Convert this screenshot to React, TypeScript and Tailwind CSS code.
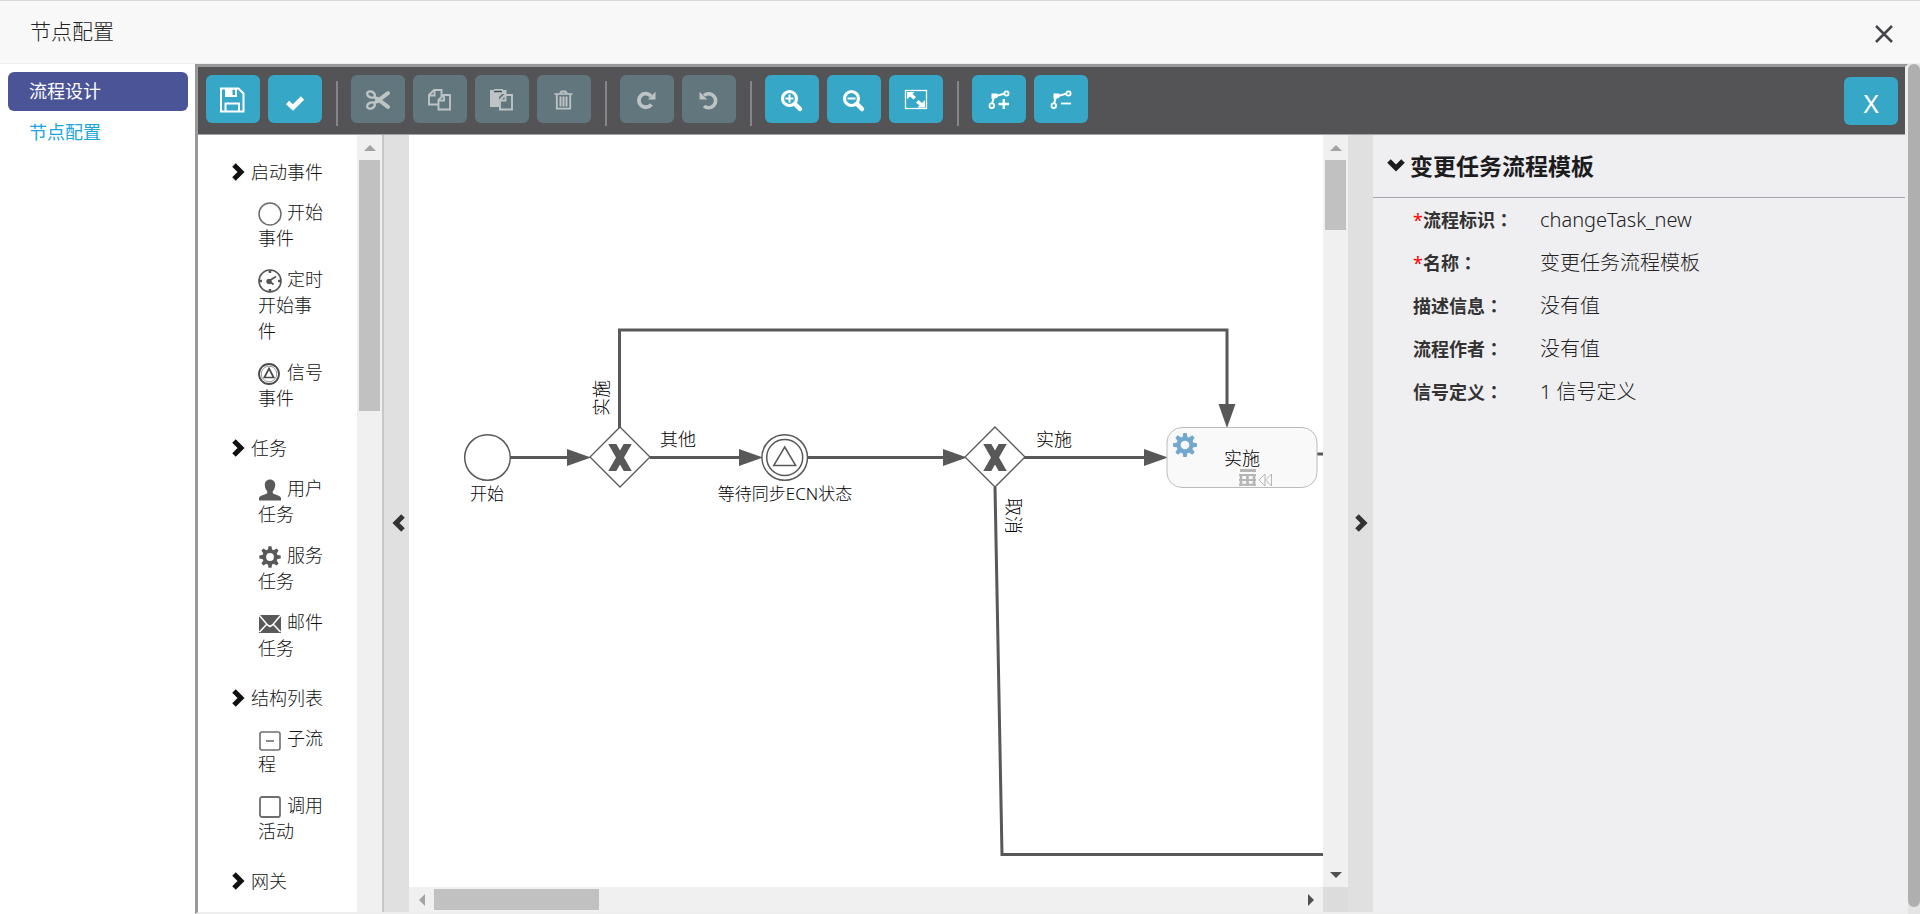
import type { ReactNode } from 'react';
import clsx from 'clsx';

type Tool = { label: string; icon: ReactNode };

// Toolbar glyphs, all drawn on a 54x48 button area
const saveIcon = (
    <>
        <path d="M15 13.500h17.500l5 5V36.500H15z" fill="none" stroke="currentColor" strokeWidth="2" />
        <path d="M19 13.500h12v8.500h-12z M26.500 14.500v5.500h2.500v-5.500z" fill="currentColor" fillRule="evenodd" />
        <path d="M19.500 36v-7.500h13.500V36" fill="none" stroke="currentColor" strokeWidth="2" />
    </>
);

const checkIcon = <path d="M19.500 27.500l5.500 5L34.500 23" fill="none" stroke="currentColor" strokeWidth="4.600" />;

const cutIcon = (
    <g fill="none" stroke="currentColor">
        <ellipse cx="20" cy="19.500" rx="4" ry="2.900" strokeWidth="2.400" transform="rotate(25 20 19.5)" />
        <ellipse cx="20" cy="30.500" rx="4" ry="2.900" strokeWidth="2.400" transform="rotate(-25 20 30.5)" />
        <path d="M23 22l4 3M23 28l4-3" strokeWidth="2.800" />
        <path d="M26 26.300L37 18.200M26 23.700L37 31.800" strokeWidth="4" strokeLinecap="round" />
    </g>
);

const copyIcon = (
    <g fill="none" stroke="currentColor" strokeWidth="1.900">
        <path d="M25 29.500h-9V20l5-5h7.500v6" />
        <path d="M16 20.500h5.500V15" />
        <path d="M37 34.500H25.500V25l5-5H37z" />
        <path d="M25.500 25.500H31V20" />
    </g>
);

const pasteIcon = (
    <>
        <path d="M15 15h4v-1h9v1h3.500v4H27l-3 3v10h-9z" fill="currentColor" />
        <path d="M19 16.500h8" stroke="#3f4d51" strokeWidth="1.500" />
        <path d="M37 34.500H25V25l5-5h7z" fill="none" stroke="currentColor" strokeWidth="1.900" />
        <path d="M25 25.500h5.500V20" fill="none" stroke="currentColor" strokeWidth="1.900" />
    </>
);

const trashIcon = (
    <g fill="none" stroke="currentColor">
        <path d="M17.500 19h18" strokeWidth="1.600" />
        <path d="M23 18.500l1.500-2h4l1.500 2" strokeWidth="1.800" />
        <path d="M19.800 19.500v14.200h13.400V19.500" strokeWidth="1.800" />
        <path d="M23.500 21.500v10M26.500 21.500v10M29.500 21.500v10" strokeWidth="2" />
    </g>
);

const redoIcon = (
    <>
        <path d="M31 21.200A6.800 6.800 0 1 0 31.300 29.300" fill="none" stroke="currentColor" strokeWidth="3.800" />
        <path d="M35.500 16.800v7.700h-7.700z" fill="currentColor" />
    </>
);

const undoIcon = (
    <>
        <path d="M22 20.500A7 7 0 1 1 22 31" fill="none" stroke="currentColor" strokeWidth="3.600" />
        <path d="M17.500 16.800v7.700h7.700z" fill="currentColor" />
    </>
);

const lens = (
    <g fill="none" stroke="currentColor">
        <circle cx="24.500" cy="23.500" r="7" strokeWidth="3.200" />
        <path d="M30 29l5 5" strokeWidth="4.500" strokeLinecap="round" />
    </g>
);

const bend = (
    <>
        <path d="M20 29l2-7.500L33 18.500" fill="none" stroke="currentColor" strokeWidth="2" />
        <path d="M19.500 18.500h6v4l-4 1.500h-2z" fill="currentColor" />
        <circle cx="19.800" cy="30.700" r="2.300" fill="#36a7c6" stroke="currentColor" strokeWidth="1.800" />
        <circle cx="34.500" cy="18.500" r="2.100" fill="#36a7c6" stroke="currentColor" strokeWidth="1.800" />
    </>
);

const zoomInIcon = (
    <>
        {lens}
        <path d="M20.500 23.500h8M24.500 19.500v8" stroke="currentColor" strokeWidth="2" />
    </>
);

const zoomOutIcon = (
    <>
        {lens}
        <path d="M20.500 23.500h8" stroke="currentColor" strokeWidth="2" />
    </>
);

const fitIcon = (
    <>
        <rect x="16.500" y="15.500" width="21" height="18" fill="none" stroke="currentColor" strokeWidth="1.300" />
        <path d="M18 17h7.500l-2 2 3.500 3-2.500 2.500-3.500-3-3 3z" fill="currentColor" />
        <path d="M36 32.500h-7.500l2-2-3.500-3 2.500-2.500 3.500 3 3-3z" fill="currentColor" />
    </>
);

const bendAddIcon = (
    <>
        {bend}
        <path d="M26.500 29h10.500M31.800 24v10" stroke="currentColor" strokeWidth="2.400" />
    </>
);

const bendRemoveIcon = (
    <>
        {bend}
        <path d="M27 28.500h10" stroke="currentColor" strokeWidth="1.800" />
    </>
);

const toolGroups: { disabled: boolean; tools: Tool[] }[] = [
    { disabled: false, tools: [{ label: '保存', icon: saveIcon }, { label: '校验', icon: checkIcon }] },
    {
        disabled: true,
        tools: [
            { label: '剪切', icon: cutIcon },
            { label: '复制', icon: copyIcon },
            { label: '粘贴', icon: pasteIcon },
            { label: '删除', icon: trashIcon },
        ],
    },
    { disabled: true, tools: [{ label: '重做', icon: redoIcon }, { label: '撤销', icon: undoIcon }] },
    {
        disabled: false,
        tools: [
            { label: '放大', icon: zoomInIcon },
            { label: '缩小', icon: zoomOutIcon },
            { label: '适应屏幕', icon: fitIcon },
        ],
    },
    { disabled: false, tools: [{ label: '添加拐点', icon: bendAddIcon }, { label: '移除拐点', icon: bendRemoveIcon }] },
];

function Gear() {
    return (
        <g fill="none" stroke="currentColor">
            <circle r="6.200" strokeWidth="4" />
            {[0, 45, 90, 135, 180, 225, 270, 315].map((a) => (
                <path key={a} d="M-2.500-7L-1.600-11.500H1.600L2.500-7z" fill="currentColor" stroke="none" transform={`rotate(${a})`} />
            ))}
        </g>
    );
}

const paletteGroups: { title: string; items: { name: string; icon: ReactNode }[] }[] = [
    {
        title: '启动事件',
        items: [
            { name: '开始事件', icon: <circle cx="12" cy="12" r="11" fill="none" stroke="#6b6b6b" strokeWidth="1.500" /> },
            {
                name: '定时开始事件',
                icon: (
                    <g fill="none" stroke="#555">
                        <circle cx="12" cy="12" r="11" strokeWidth="1.600" />
                        <path d="M12 1v3M12 20v3M1 12h3M20 12h3" strokeWidth="2.500" />
                        <circle cx="11" cy="12.500" r="2.300" fill="#555" />
                        <path d="M11 12l7-4.500M11 12l4.500 3.500" strokeWidth="1.800" />
                    </g>
                ),
            },
            {
                name: '信号事件',
                icon: (
                    <g fill="none" stroke="#4a4a4a">
                        <circle cx="11" cy="12" r="10" strokeWidth="1.800" />
                        <circle cx="11" cy="12" r="7.800" strokeWidth="1" stroke="#999" />
                        <path d="M11 6.500l4.700 9H6.300z" strokeWidth="1.700" />
                    </g>
                ),
            },
        ],
    },
    {
        title: '任务',
        items: [
            {
                name: '用户任务',
                icon: (
                    <path
                        d="M12 1.500c3.200 0 5.200 2.300 5.200 5.500 0 2.500-1 4.800-2.400 6v2.300c1.500 1.700 8.200 1.900 8.200 5v2.200H1v-2.200c0-3.100 6.700-3.300 8.200-5V13C7.800 11.800 6.800 9.500 6.800 7c0-3.200 2-5.500 5.200-5.500z"
                        fill="#595959"
                    />
                ),
            },
            {
                name: '服务任务',
                icon: (
                    <g transform="translate(12 12) scale(.93)" color="#595959">
                        <Gear />
                    </g>
                ),
            },
            {
                name: '邮件任务',
                icon: (
                    <>
                        <path d="M1 3h22v18H1z" fill="#595959" />
                        <path d="M1 3l8.500 10 2.500 1.500 2.500-1.500L23 3M1.500 20l7-7.500M22.500 20l-7-7.500" fill="none" stroke="#fff" strokeWidth="1.600" />
                    </>
                ),
            },
        ],
    },
    {
        title: '结构列表',
        items: [
            {
                name: '子流程',
                icon: (
                    <g fill="none" stroke="#6e6e6e" strokeWidth="1.600">
                        <rect x="2" y="4" width="20" height="18" rx="2" />
                        <path d="M8 13h8" />
                    </g>
                ),
            },
            {
                name: '调用活动',
                icon: <rect x="2" y="2" width="20" height="20" rx="2" fill="none" stroke="#6e6e6e" strokeWidth="1.800" />,
            },
        ],
    },
    { title: '网关', items: [] },
];

const properties = [
    { id: 'process_id', label: '流程标识', value: 'changeTask_new', required: true },
    { id: 'name', label: '名称', value: '变更任务流程模板', required: true },
    { id: 'documentation', label: '描述信息', value: '没有值', required: false },
    { id: 'author', label: '流程作者', value: '没有值', required: false },
    { id: 'signals', label: '信号定义', value: '1 信号定义', required: false },
];

function Chevron({ direction }: { direction: 'right' | 'left' | 'down' }) {
    return (
        <svg
            className={clsx('size-[18px] shrink-0', direction === 'left' && 'rotate-180', direction === 'down' && 'rotate-90')}
            viewBox="0 0 18 18"
        >
            <path d="M4 2l7 7-7 7" fill="none" stroke="currentColor" strokeWidth="5" />
        </svg>
    );
}

function Arrow({ className }: { className: string }) {
    return (
        <span className="flex size-[25px] shrink-0 items-center justify-center">
            <svg className={clsx('h-[6px] w-[12px]', className)} viewBox="0 0 12 6">
                <path d="M6 0l6 6H0z" fill="currentColor" />
            </svg>
        </span>
    );
}

function Toolbar() {
    return (
        <div className="flex h-[68px] shrink-0 items-center border-b border-[#a3a3a6] bg-[#545456] pr-[7px] pb-[3px] pl-2">
            {toolGroups.map((group, i) => (
                <div key={i} className="flex items-center">
                    {i > 0 && <span className="mt-2 mr-[13px] ml-[14px] h-[45px] w-[2px] bg-[#85858c]" />}
                    <div className="flex gap-2">
                        {group.tools.map((tool) => (
                            <button
                                key={tool.label}
                                type="button"
                                aria-label={tool.label}
                                disabled={group.disabled}
                                className={clsx(
                                    'h-[48px] w-[54px] rounded-md',
                                    group.disabled ? 'bg-[#61777d] text-[#bec3c5]' : 'bg-[#36a7c6] text-white',
                                )}
                            >
                                <svg className="size-full" viewBox="0 0 54 48">{tool.icon}</svg>
                            </button>
                        ))}
                    </div>
                </div>
            ))}
            <button
                type="button"
                className="mt-1 ml-auto h-[48px] w-[54px] rounded-md bg-[#36a7c6] pt-1 text-[26px] text-white"
            >
                X
            </button>
        </div>
    );
}

function Palette() {
    return (
        <div className="flex w-[186px] shrink-0 border-r-2 border-[#c4c9cd]">
            <div className="min-w-0 flex-1 overflow-hidden pl-8">
                {paletteGroups.map((group) => (
                    <section key={group.title} className="text-lg/[26px] font-light text-[#111]">
                        <button type="button" className="flex items-center pt-6 pb-[14px] whitespace-nowrap">
                            <Chevron direction="right" />
                            <span className="pl-[3px]">{group.title}</span>
                        </button>
                        <ul className="ml-7 w-[70px]">
                            {group.items.map((item) => (
                                <li key={item.name} className="mb-[15px] last:mb-0">
                                    <svg className="-my-1 mr-[5px] inline-block size-6 align-middle" viewBox="0 0 24 24">
                                        {item.icon}
                                    </svg>
                                    {item.name}
                                </li>
                            ))}
                        </ul>
                    </section>
                ))}
            </div>
            <div className="w-[25px] shrink-0 bg-[#f0f0f0]">
                <Arrow className="text-[#a3a3a3]" />
                <div className="mx-auto h-[251px] w-[21px] bg-[#c1c1c1]" />
            </div>
        </div>
    );
}

function Gateway({ x, y }: { x: number; y: number }) {
    return (
        <g transform={`translate(${x} ${y})`} stroke="#585858">
            <path d="M0-30L30 0 0 30-30 0z" fill="#fff" strokeWidth="1.300" />
            <clipPath id={`marker-${x}`}>
                <rect x="-13" y="-13" width="26" height="27" />
            </clipPath>
            <path d="M-10-17L10 18M10-17L-10 18" strokeWidth="7" clipPath={`url(#marker-${x})`} />
        </g>
    );
}

function Diagram() {
    return (
        <svg className="block h-full w-full text-lg" role="img" aria-label="变更任务流程图">
            <g fill="none" stroke="#585858" strokeWidth="3">
                <path d="M101 322.500h62M241 322.500h94M398 322.500h140M615 322.500h124" />
                <path d="M210.500 293V195H818V272" />
                <path d="M586 352L593 719.500H2400M908 319H2400" />
            </g>
            <g fill="#585858">
                <path d="M158 314v17l24-8.500zM330 314v17l24-8.500zM534 314v17l24-8.500zM735 314v17l24-8.500z" />
                <path d="M809.500 269h17L818 293z" />
            </g>

            <g fill="#fff" stroke="#585858" strokeWidth="1.500">
                <circle cx="78.500" cy="322.500" r="22.800" />
                <circle cx="375.700" cy="322.500" r="22.800" />
                <circle cx="375.700" cy="322.500" r="18" />
                <path d="M375.700 312l11 18.500h-22z" />
            </g>
            <Gateway x={211} y={322} />
            <Gateway x={586} y={322} />

            <rect x="758" y="292.500" width="150" height="60" rx="15" fill="#f9f9f9" stroke="#bbb" />
            <g transform="translate(776 310) scale(1.040)" color="#72a7d0">
                <Gear />
            </g>
            <g fill="none" stroke="#b5b5b5">
                <path d="M831 335.500h16" strokeWidth="3" />
                <path d="M830 340h17M830 345h17M830 349.700h17" strokeWidth="2" />
                <path d="M832 339v12M838.500 339v12M845 339v12" strokeWidth="2.600" />
                <path d="M856 339v12l-6-6zM862.500 339v12l-6-6z" />
            </g>

            <g fill="#000" textAnchor="middle" className="font-light">
                <g className="text-[17px]">
                    <text x="78" y="365">开始</text>
                    <text x="376" y="365">等待同步ECN状态</text>
                </g>
                <text x="269" y="311">其他</text>
                <text x="645" y="311">实施</text>
                <text x="833" y="330">实施</text>
                <text transform="translate(199 263) rotate(-90)">实施</text>
                <text transform="translate(598 381) rotate(90)">取消</text>
            </g>
        </svg>
    );
}

function Canvas() {
    return (
        <div className="flex min-w-0 flex-1">
            <div className="flex min-w-0 flex-1 flex-col">
                <div className="min-h-0 flex-1 overflow-hidden bg-white">
                    <Diagram />
                </div>
                <div className="flex h-[25px] shrink-0 items-center bg-[#f0f0f0]">
                    <Arrow className="-rotate-90 text-[#a3a3a3]" />
                    <div className="h-[21px] w-[165px] bg-[#c1c1c1]" />
                    <span className="flex-1" />
                    <Arrow className="rotate-90 text-[#505050]" />
                </div>
            </div>
            <div className="flex w-[25px] shrink-0 flex-col items-center bg-[#f0f0f0]">
                <Arrow className="text-[#a3a3a3]" />
                <div className="h-[70px] w-[21px] bg-[#c1c1c1]" />
                <span className="flex-1" />
                <Arrow className="rotate-180 text-[#505050]" />
                <span className="size-[25px] bg-[#dcdcdc]" />
            </div>
        </div>
    );
}

function Splitter({ direction }: { direction: 'left' | 'right' }) {
    return (
        <button
            type="button"
            aria-label={direction === 'left' ? '收起组件栏' : '收起属性栏'}
            className="flex w-[25px] shrink-0 items-center justify-center bg-[#e0e0e0] pb-[2px] pl-[2px] text-[#333]"
        >
            <Chevron direction={direction} />
        </button>
    );
}

function PropertyPanel() {
    return (
        <div className="w-[532px] shrink-0 bg-[#efeff1]">
            <h2 className="border-b border-[#a5a7b0]">
                <button type="button" className="flex h-[62px] items-center gap-[5px] pl-[14px] text-[23px] font-bold text-[#1c1c1e]">
                    <Chevron direction="down" />
                    变更任务流程模板
                </button>
            </h2>
            <dl className="pl-10">
                {properties.map((property) => (
                    <div key={property.id} className="flex h-[43px] items-center">
                        <dt className="w-[127px] text-lg font-bold text-[#333]">
                            {property.required && <span className="font-normal text-[#f00]">*</span>}
                            {property.label}
                            <span className="font-['Noto_Sans_CJK_JP',sans-serif]">：</span>
                        </dt>
                        <dd className="text-xl font-light text-[#222]">{property.value}</dd>
                    </div>
                ))}
            </dl>
        </div>
    );
}

export default function App() {
    return (
        <div className="flex h-screen min-h-[600px] flex-col overflow-hidden bg-white font-['Noto_Sans','Noto_Sans_CJK_SC',sans-serif]">
            <header className="flex h-16 shrink-0 items-center justify-between border-t border-b border-t-[#d9d9d9] border-b-[#eee] bg-[#f8f8f8] pr-[27px] pl-[30px]">
                <h1 className="text-[21px] font-light text-[#222]">节点配置</h1>
                <button type="button" aria-label="关闭" className="text-[#44444c]">
                    <svg className="mt-1 size-[18px]" viewBox="0 0 18 18">
                        <path d="M1 1l16 16M17 1L1 17" stroke="currentColor" strokeWidth="2.500" />
                    </svg>
                </button>
            </header>

            <div className="flex min-h-0 flex-1">
                <nav className="flex w-[195px] shrink-0 flex-col gap-[2px] pt-2 pr-[7px] pl-2 text-lg">
                    <a href="#design" className="flex h-[39px] items-center rounded-md bg-[#4b5496] px-[21px] pb-[2px] text-white">
                        流程设计
                    </a>
                    <a href="#config" className="flex h-[39px] items-center rounded-md px-[21px] pb-[2px] text-[#1ba5dc]">
                        节点配置
                    </a>
                </nav>

                <main className="flex min-w-0 flex-1 flex-col border-t-[3px] border-r-[3px] border-b-2 border-l-[3px] border-t-[#999] border-r-[#eee] border-b-[#eee] border-l-[#999]">
                    <Toolbar />
                    <div className="flex min-h-0 flex-1">
                        <Palette />
                        <Splitter direction="left" />
                        <Canvas />
                        <Splitter direction="right" />
                        <PropertyPanel />
                    </div>
                </main>

                <div className="w-3 shrink-0 bg-[#e4e4e4] pb-[7px]">
                    <div className="h-full rounded-full bg-[#afafaf]" />
                </div>
            </div>
        </div>
    );
}
